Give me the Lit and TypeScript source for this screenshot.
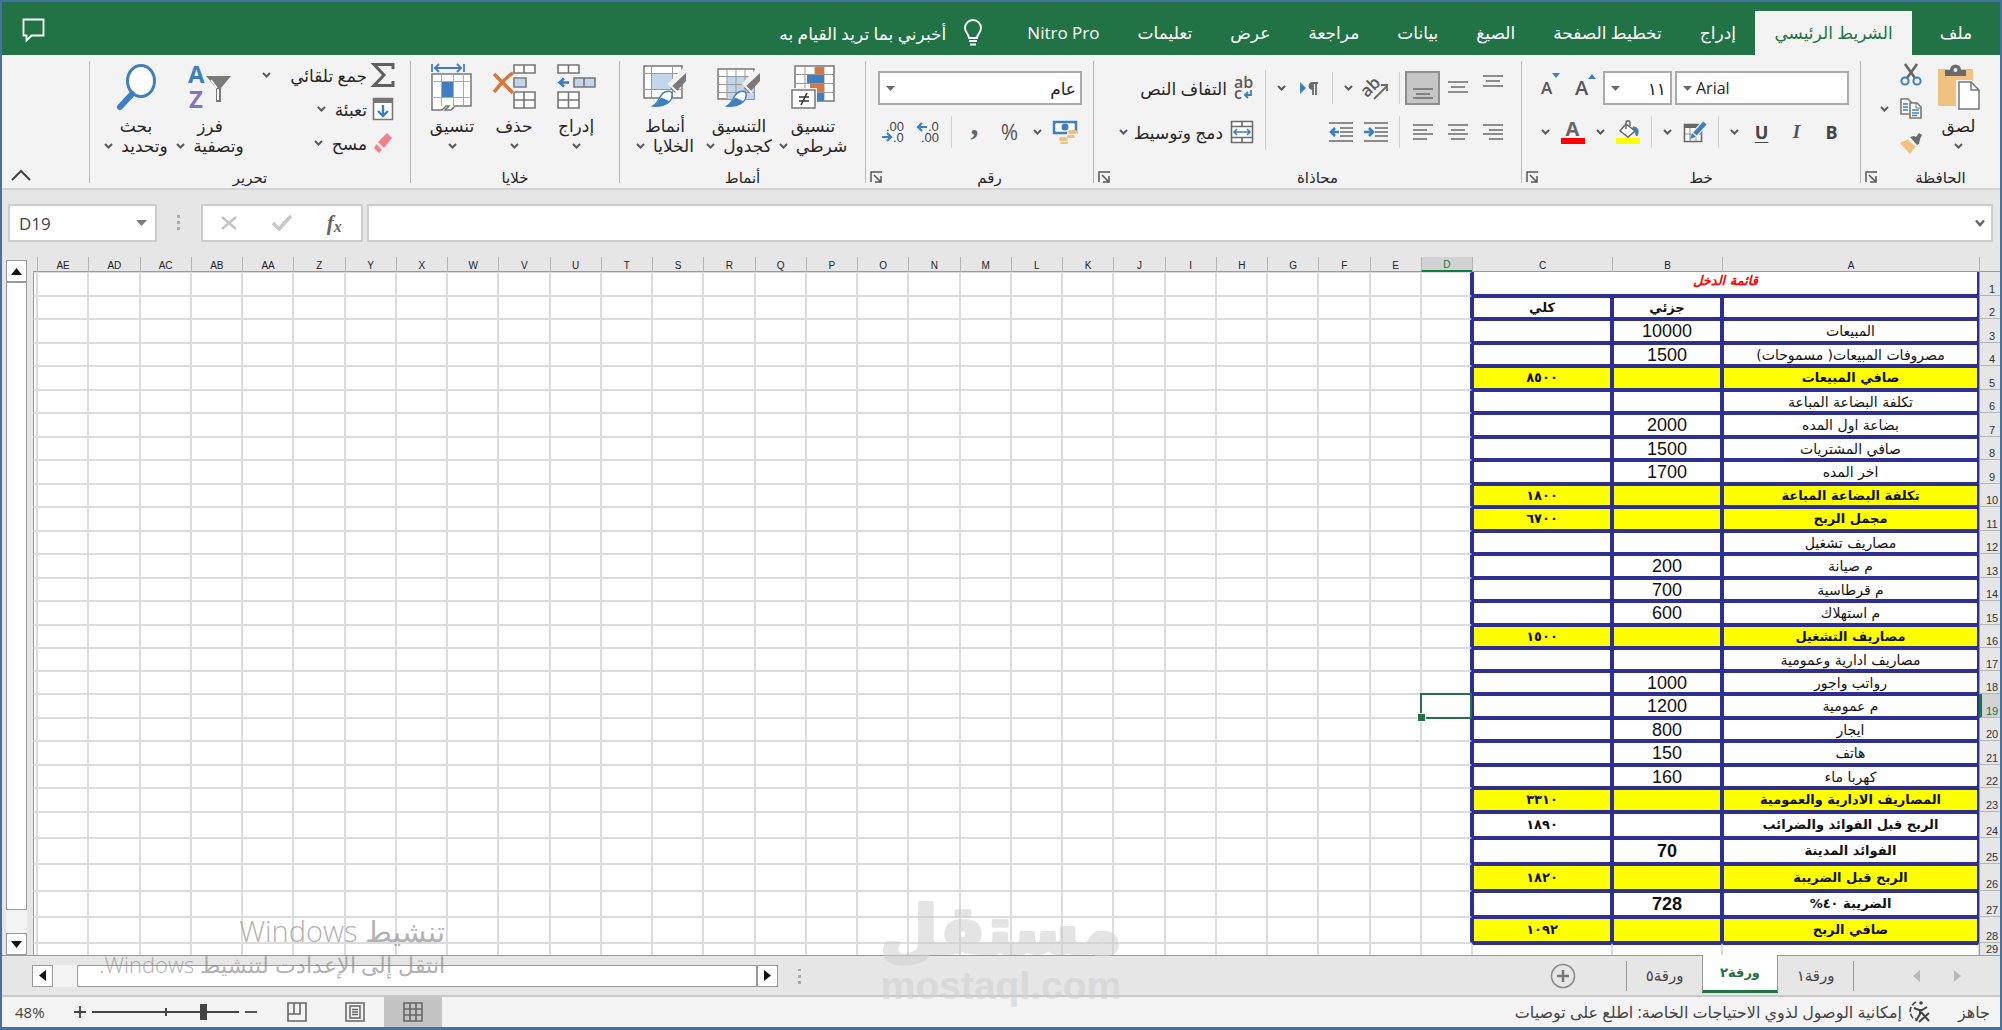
import { LitElement, html, css, svg, nothing } from "lit";
import { customElement, property } from "lit/decorators.js";
import { classMap } from "lit/directives/class-map.js";

const icon = (w: number, h: number, body: unknown) =>
  html`<svg width=${w} height=${h} viewBox="0 0 ${w} ${h}" fill="none" direction="ltr" aria-hidden="true">${body}</svg>`;

const B = "#3f7fbf";
const T = "#efc27f";
const O = "#d9763c";

const chevron = icon(9, 6, svg`<path d="M1 1l3.5 3.5L8 1" stroke="#5a5a5a" stroke-width="2"/>`);
const caret = icon(9, 5, svg`<path d="M0 0h9L4.500 5z" fill="#6a6a6a"/>`);
const launcher = icon(12, 12, svg`<path d="M1 11V1h11M4 4l6 6M11 5v6H5" stroke="#555" stroke-width="1.500"/>`);

const paste = icon(42, 45, svg`<rect y="4" width="35" height="37" rx="1" fill="${T}"/><path d="M7 11V5h5a5.500 5.500 0 0 1 11 0h5v6z" fill="#6a6a6a"/><circle cx="17.500" cy="5" r="2" fill="#f3f3f3"/><path d="M20 17h13l8 8v19H20z" fill="#fff" stroke="#f3f3f3" stroke-width="4"/><path d="M21 17h12l8 8v19H21zM33 17v8h8" fill="#fff" stroke="#777" stroke-width="1.500"/>`);
const cut = icon(22, 22, svg`<path d="M5 0l10 14M17 0L7 14" stroke="#666" stroke-width="2.600"/><circle cx="5" cy="17" r="3.600" stroke="${B}" stroke-width="2"/><circle cx="17" cy="17" r="3.600" stroke="${B}" stroke-width="2"/>`);
const copy = icon(22, 22, svg`<path d="M1 1h7l3 3v12H1z" fill="#fff" stroke="#777" stroke-width="1.600"/><path d="M3 6h5M3 9h5M3 12h5" stroke="${B}" stroke-width="1.300"/><path d="M10 5h7l4 4v11H10z" fill="#fff" stroke="#777" stroke-width="1.600"/><path d="M16 5v5h5" stroke="#777"/><path d="M12 12h7M12 15h7M12 17.500h5" stroke="${B}" stroke-width="1.300"/>`);
const brush = icon(24, 22, svg`<path d="M1 11l8-4 8 7-6 8z" fill="${T}"/><path d="M9 6l9 8" stroke="#f3f3f3" stroke-width="3"/><path d="M11 5l4-1 2 1 3-4 3 2-2 4-1 5-2 1z" fill="#6a6a6a"/>`);

const bigA = (s: number, up: boolean) => html`<span class="grow"><span class=${s > 19 ? "ga" : "gs"}>A</span>${icon(8, 5, up ? svg`<path d="M4 0l4 5H0z" fill="${B}"/>` : svg`<path d="M0 0h8L4 5z" fill="${B}"/>`)}</span>`;
const borders = icon(24, 22, svg`<path d="M1.500 3.500h17v17h-17z" fill="#fff" stroke="#666" stroke-width="1.600"/><path d="M1 3h18v4H1z" fill="#666"/><path d="M7 7v13M13 7v13M2 13h17" stroke="#888"/><path d="M21 3L10 15" stroke="#f3f3f3" stroke-width="7"/><path d="M22 2L12 13" stroke="${B}" stroke-width="4.500"/><path d="M7 18l2-6 4 4z" fill="${B}"/>`);
const bucket = icon(24, 24, svg`<rect y="18" width="24" height="6" fill="#ff0"/><path d="M17 7c6 0 6 5 4 9-2-2-1-5-4-7z" fill="${B}" stroke="${B}"/><path d="M10 4l9 7-7 6-8-6z" fill="#fff" stroke="#666" stroke-width="1.500"/><path d="M10 9V3c0-3 4-3 4 0v3" stroke="#666" stroke-width="1.500"/>`);
const fontColor = html`<span class="fcol"><b>A</b><i></i></span>`;

const lines = (ys: number[], xs: [number, number][]) =>
  icon(22, 22, svg`<path d="${ys.map((y, i) => `M${xs[i][0]} ${y}H${xs[i][1]}`).join("")}" stroke="#6b6b6b" stroke-width="1.600"/>`);
const full: [number, number] = [1, 21];
const mid: [number, number] = [4, 18];
const right: [number, number] = [7, 21];
const left: [number, number] = [1, 15];
const vTop = lines([-1, 4, 9], [full, mid, full]);
const vMid = lines([5, 10, 15], [full, mid, full]);
const vBot = lines([12, 17, 21], [full, mid, full]);
const aRight = lines([4, 9, 13, 18], [full, right, full, right]);
const aCenter = lines([4, 9, 13, 18], [full, mid, full, mid]);
const aLeft = lines([4, 9, 13, 18], [full, left, full, left]);
const orient = icon(26, 24, svg`<g transform="rotate(-45 9 13)"><text x="-1" y="16" font-family="Open Sans, sans-serif" font-size="17" font-weight="600" fill="#5a5a5a">ab</text></g><path d="M11 23L24 10M18 9h6v6" stroke="#6b6b6b" stroke-width="1.800"/>`);
const rtlPara = icon(22, 16, svg`<path d="M2 2v12l6-6z" fill="${B}"/><path d="M15 3v12M18 3v12M20 3h-6" stroke="#6b6b6b" stroke-width="1.800"/><path d="M15 2c-6 0-6 8 0 8z" fill="#6b6b6b"/>`);
const indentIn = icon(24, 22, svg`<path d="M0 2h24M11 7h13M11 11h13M11 15h13M0 20h24" stroke="#6b6b6b" stroke-width="1.600"/><path d="M0 11h8M5 7l4 4-4 4" stroke="${B}" stroke-width="2.600"/>`);
const indentOut = icon(24, 22, svg`<path d="M0 2h24M11 7h13M11 11h13M11 15h13M0 20h24" stroke="#6b6b6b" stroke-width="1.600"/><path d="M2 11h8M6 7l-4 4 4 4" stroke="${B}" stroke-width="2.600"/>`);
const wrap = icon(20, 24, svg`<text x="0" y="12" font-family="Open Sans, sans-serif" font-size="16" font-weight="600" fill="#5a5a5a">ab</text><text x="0" y="23" font-family="Open Sans, sans-serif" font-size="16" font-weight="600" fill="#5a5a5a">c</text><path d="M17 14v5h-5M14 16l-3 3 3 3" stroke="${B}" stroke-width="1.800"/>`);
const merge = icon(24, 24, svg`<path d="M1.500 1.500h21v21h-21zM1 6.500h22M1 17.500h22M12 1v5M12 18v5" fill="#fff" stroke="#6b6b6b" stroke-width="1.600"/><path d="M4 12h16M7 9l-3 3 3 3M17 9l3 3-3 3" stroke="${B}" stroke-width="1.600"/>`);

const currency = icon(24, 24, svg`<path d="M1 2h22v11H1z" fill="#fff" stroke="${B}" stroke-width="2.500"/><circle cx="12" cy="7" r="3.500" fill="${B}"/><path d="M0 1h5L0 6zM24 1h-5l5 5zM0 14h5L0 9z" fill="${B}"/><path d="M14 12h10v8h-8v4H6v-7h8z" fill="#f3f3f3"/><rect x="15" y="10" width="9" height="4" rx="2" fill="${T}"/><rect x="14" y="15" width="8" height="3" rx="1.500" fill="${T}"/><rect x="6" y="17" width="9" height="4" rx="2" fill="${T}"/><rect x="7" y="22" width="8" height="2" rx="1" fill="${T}"/>`);
const decInc = icon(22, 22, svg`<path d="M1 6h9M5 2L1 6l4 4" stroke="${B}" stroke-width="2.200"/><text x="11" y="10" font-family="Liberation Sans" font-size="13" fill="#444">.0</text><text x="4" y="21" font-family="Liberation Sans" font-size="13" fill="#444">.00</text>`);
const decDec = icon(22, 22, svg`<text x="4" y="10" font-family="Liberation Sans" font-size="13" fill="#444">.00</text><text x="11" y="21" font-family="Liberation Sans" font-size="13" fill="#444">.0</text><path d="M0 16h9M5 12l4 4-4 4" stroke="${B}" stroke-width="2.200"/>`);

const condFmt = icon(44, 44, svg`<path d="M4 1h39v35H4z" fill="#fff" stroke="#777" stroke-width="1.500"/><path d="M4 9.500h39M4 18.500h39M4 27.500h39M14 1v35M24 1v35M33 1v35" stroke="#999"/><path d="M24 2h9v7h-9zM19 19h14v8H19z" fill="${O}"/><path d="M16 10h17v8H16zM26 28h7v8h-7z" fill="${B}"/><path d="M1 25h23v18H1z" fill="#fff" stroke="#f3f3f3" stroke-width="4"/><path d="M1 25h23v18H1z" fill="#fff" stroke="#777" stroke-width="1.500"/><path d="M8 32h10M8 36h10M16 28l-6 12" stroke="#333" stroke-width="1.600"/>`);
const paint = svg`<path d="M43 6L28 22" stroke="#f3f3f3" stroke-width="9"/><path d="M43 8v8L32 28l-5-5z" fill="#7a7a7a"/><path d="M27 20l8 8" stroke="#f3f3f3" stroke-width="2"/><path d="M29 28c2 10-10 14-19 13 7-4 6-12 12-14 3-1 6-1 7 1z" fill="#fff" stroke="${B}" stroke-width="1.500"/><path d="M10 41c5-3 6-7 8-8 3 0 5 2 8 3-3 5-10 6-16 5z" fill="${B}"/>`;
const fmtTable = icon(44, 44, svg`<path d="M1 4h36v30H1z" fill="#fff" stroke="#777" stroke-width="1.500"/><path d="M10 12h27v22H10z" fill="#c3d5ea"/><path d="M1 11.500h36M1 19.500h36M1 27.500h36M10 4v30M19 4v30M28 4v30" stroke="#999"/>${paint}`);
const cellStyles = icon(44, 44, svg`<path d="M1 1h38v32H1z" fill="#fff" stroke="#777" stroke-width="1.500"/><path d="M9 9h20v15H9z" fill="#c3d5ea"/><path d="M1 8.500h38M1 24.500h38M8.500 1v32M29.500 1v32" stroke="#999"/>${paint}`);

const cellsInsert = icon(40, 46, svg`<path d="M2 1h21v8H2zM12.500 1v8M2 28h21v16H2zM12.500 28v16M2 36h21" fill="#fff" stroke="#777" stroke-width="1.600"/><path d="M18 14h21v9H18zM28 14v9" fill="#c3d5ea" stroke="#777" stroke-width="1.600"/><path d="M3 18.500h10M8 14.500l-4.500 4L8 22.500" stroke="${B}" stroke-width="2.600"/>`);
const cellsDelete = icon(46, 46, svg`<path d="M23 1h21v8H23zM33 1v8M23 28h21v16H23zM33 28v16M23 36h21M23 14h12v9H23z" fill="#fff" stroke="#777" stroke-width="1.600"/><path d="M24 15h10v7H24z" fill="#c3d5ea"/><path d="M3 10c6 6 14 14 19 19M22 9C15 13 8 22 3 28" stroke="#f3f3f3" stroke-width="7"/><path d="M3 10c6 6 14 14 19 19M22 9C15 13 8 22 3 28" stroke="${O}" stroke-width="3.500"/>`);
const cellsFormat = icon(44, 48, svg`<path d="M2 1v8M34 1v8M4 5h28M9 1L5 5l4 4M27 1l4 4-4 4" stroke="${B}" stroke-width="1.800"/><path d="M2 11h39v32H25l-4 4h-6l4-4h-3l-4 4H2z" fill="#fff" stroke="#777" stroke-width="1.500"/><path d="M2 18.500h39M2 34.500h39M11.500 11v32M23.500 11v32M33.500 11v32" stroke="#aaa"/><path d="M12 19h11v15H12z" fill="${B}"/>`);

const sigma = icon(22, 24, svg`<path d="M21 6V1.500H2L12 12 2 22.500h19V18" stroke="#5f5f5f" stroke-width="3"/>`);
const fill = icon(22, 24, svg`<path d="M1.500 1.500h19v21h-19z" fill="#fff" stroke="#777" stroke-width="1.600"/><path d="M1 1h20v5H1z" fill="#777"/><path d="M11 8v11M6 14l5 5 5-5" stroke="${B}" stroke-width="2.400"/>`);
const eraser = icon(22, 22, svg`<path d="M15 1l5 5-8 10-6-6z" fill="#f0808a"/><path d="M4.500 12l5.500 6-3 3-5-5z" fill="#f0808a"/>`);
const sortIcon = icon(44, 46, svg`<text x="0" y="19" font-family="Open Sans, sans-serif" font-size="24" font-weight="700" fill="${B}">A</text><text x="1" y="44" font-family="Open Sans, sans-serif" font-size="24" font-weight="700" fill="#8474bd">Z</text><path d="M18 12h25L33 24v14h-5V24z" fill="#7a7a7a"/><path d="M29 24l-6-8" stroke="#fff" stroke-width="1.500"/><path d="M30 25v11" stroke="#fff" stroke-width="2"/>`);
const findIcon = icon(42, 48, svg`<ellipse cx="26" cy="18" rx="13.500" ry="15.500" fill="#fff" stroke="${B}" stroke-width="3"/><path d="M17 31L5 44" stroke="${B}" stroke-width="6" stroke-linecap="round"/>`);

const bulb = icon(18, 26, svg`<path d="M5 18c0-4-4-5-4-10a8 8 0 0 1 16 0c0 5-4 6-4 10zM5 21h8M6 24.500h6" stroke="#fff" stroke-width="1.800"/>`);
const comment = icon(26, 28, svg`<path d="M1.500 3.500h20v16h-12l-5 5v-5h-3z" stroke="#fff" stroke-width="1.800"/>`);

interface Row { n: number; h: number; a?: string; b?: string; c?: string; kind?: "total" | "strong" | "title" | "heads" }

const rows: Row[] = [
  { n: 1, h: 24, a: "قائمة الدخل", kind: "title" },
  { n: 2, h: 23, b: "جزئي", c: "كلي", kind: "heads" },
  { n: 3, h: 24, a: "المبيعات", b: "10000" },
  { n: 4, h: 23, a: "مصروفات المبيعات( مسموحات)", b: "1500" },
  { n: 5, h: 24, a: "صافي المبيعات", c: "٨٥٠٠", kind: "total" },
  { n: 6, h: 23, a: "تكلفة البضاعة المباعة" },
  { n: 7, h: 24, a: "بضاعة اول المده", b: "2000" },
  { n: 8, h: 23, a: "صافي المشتريات", b: "1500" },
  { n: 9, h: 24, a: "اخر المده", b: "1700" },
  { n: 10, h: 23, a: "تكلفة البضاعة المباعة", c: "١٨٠٠", kind: "total" },
  { n: 11, h: 24, a: "مجمل الربح", c: "٦٧٠٠", kind: "total" },
  { n: 12, h: 23, a: "مصاريف تشغيل" },
  { n: 13, h: 24, a: "م صيانة", b: "200" },
  { n: 14, h: 23, a: "م قرطاسية", b: "700" },
  { n: 15, h: 24, a: "م استهلاك", b: "600" },
  { n: 16, h: 23, a: "مصاريف التشغيل", c: "١٥٠٠", kind: "total" },
  { n: 17, h: 23, a: "مصاريف ادارية وعمومية" },
  { n: 18, h: 23, a: "رواتب واجور", b: "1000" },
  { n: 19, h: 24, a: "م عمومية", b: "1200" },
  { n: 20, h: 23, a: "ايجار", b: "800" },
  { n: 21, h: 24, a: "هاتف", b: "150" },
  { n: 22, h: 23, a: "كهربا ماء", b: "160" },
  { n: 23, h: 24, a: "المصاريف الادارية والعمومية", c: "٣٣١٠", kind: "total" },
  { n: 24, h: 26, a: "الربح قبل الفوائد والضرائب", c: "١٨٩٠", kind: "strong" },
  { n: 25, h: 26, a: "الفوائد المدينة", b: "70", kind: "strong" },
  { n: 26, h: 27, a: "الربح قبل الضريبة", c: "١٨٢٠", kind: "total" },
  { n: 27, h: 26, a: "الضريبة ٤٠%", b: "728", kind: "strong" },
  { n: 28, h: 26, a: "صافي الربح", c: "١٠٩٢", kind: "total" },
  { n: 29, h: 26 },
];

const restCols = "D E F G H I J K L M N O P Q R S T U V W X Y Z AA AB AC AD AE".split(" ");

@customElement("excel-group")
class ExcelGroup extends LitElement {
  @property() label = "";
  @property({ type: Boolean }) launch = false;
  static styles = css`
    :host { display: flex; flex-direction: column; box-sizing: border-box; flex: none; }
    .body { display: flex; height: 109px; }
    .foot { display: flex; height: 20px; align-items: center; font-size: 15px; }
    .name { flex: 1; text-align: center; }
    button { border: 0; background: none; padding: 0; width: 20px; height: 18px; display: grid; place-items: center; }
    svg { display: block; }
  `;
  render() {
    return html`<div class="body"><slot></slot></div>
      <div class="foot"><span class="name">${this.label}</span>
      ${this.launch ? html`<button aria-label="خيارات ${this.label}">${launcher}</button>` : nothing}</div>`;
  }
}

@customElement("excel-sheet")
class ExcelSheet extends LitElement {
  static styles = css`
    :host { display: block; flex: 1; min-width: 0; overflow: hidden; direction: rtl; font-family: "Liberation Sans", "DejaVu Sans", sans-serif; }
    table { width: 100%; table-layout: fixed; border-collapse: separate; border-spacing: 0; }
    th, td { box-sizing: border-box; padding: 0; overflow: hidden; white-space: nowrap; text-align: center; line-height: 16px; }
    .rowhead { width: 21px; } .wa { width: 257px; } .wb { width: 110px; } .wc { width: 140px; } .stub { width: 4px; }
    thead th { height: 15px; line-height: 11px; font-size: 10px; font-weight: 400; color: #222; vertical-align: bottom; border-bottom: 1px solid #9a9a9a; border-left: 1px solid #b5b5b5; background: #e6e6e6; }
    thead .on { background: #d2d2d2; color: #217346; border-bottom: 2px solid #107c41; }
    thead .edge { border-left: 0; }
    .h23 { height: 23px; } .h24 { height: 24px; } .h26 { height: 26px; } .h27 { height: 27px; }
    tbody th { background: #e6e6e6; font-size: 11px; font-weight: 400; color: #333; line-height: 12px; vertical-align: bottom; border-bottom: 1px solid #b5b5b5; border-left: 1px solid #9a9a9a; padding-left: 4px; text-align: center; }
    tbody th.on { background: #d2d2d2; color: #217346; border-left: 3px solid #107c41; padding-left: 2px; }
    tbody th.top { vertical-align: top; }
    td { background: #fff; border: 1px solid #dcdcdc; }
    td.edge { border-left: 1px solid #9a9a9a; }
    td.box { border: 2px solid #2d3092; color: #111; }
    td.a { font-family: "DejaVu Sans", sans-serif; font-size: 14px; }
    td.b { font-size: 18px; }
    td.c { font-family: "DejaVu Sans", sans-serif; font-size: 13px; font-weight: 700; }
    .total td.box { background: #ff0; }
    .total td.box, .strong td.box { font-weight: 700; }
    .total td.a, .strong td.a, .title td.a { font-size: 13px; }
    .heads td.box { font-family: "DejaVu Sans", sans-serif; font-size: 13px; font-weight: 700; }
    .title td.a { border-top: 0; color: #f00; font-weight: 700; font-style: italic; vertical-align: top; line-height: 18px; }
    td.after { border-top: 2px solid #2d3092; }
    td.navy { border-right: 2px solid #2d3092; }
    td.sel { position: relative; overflow: visible; }
    .cursor { position: absolute; inset: -2px; border: 2px solid #217346; }
    .cursor::after { content: ""; position: absolute; left: -5px; bottom: -5px; width: 7px; height: 7px; background: #217346; border: 1px solid #fff; }
  `;
  row(r: Row) {
    const inBox = r.n < 29;
    const cell = (k: string, v?: string) => html`<td class=${inBox ? `box ${k}` : "after"}>${v ?? nothing}</td>`;
    return html`<tr class="h${r.h} ${r.kind ?? ""}">
      <th scope="row" class=${classMap({ on: r.n === 19, top: !inBox })}>${r.n}</th>
      ${r.kind === "title" ? html`<td class="box a" colspan="3">${r.a}</td>` : html`${cell("a", r.a)}${cell("b", r.b)}${cell("c", r.c)}`}
      ${restCols.map((c) => html`<td class=${classMap({ navy: c === "D" && inBox, sel: c === "D" && r.n === 19 })}>${c === "D" && r.n === 19 ? html`<span class="cursor"></span>` : nothing}</td>`)}
      <td class="edge"></td>
    </tr>`;
  }
  render() {
    return html`<table>
      <colgroup><col class="rowhead"><col class="wa"><col class="wb"><col class="wc">${restCols.map(() => html`<col>`)}<col class="stub"></colgroup>
      <thead><tr><th></th><th scope="col">A</th><th scope="col">B</th><th scope="col">C</th>
        ${restCols.map((c) => html`<th scope="col" class=${classMap({ on: c === "D" })}>${c}</th>`)}<th class="edge"></th></tr></thead>
      <tbody>${rows.map((r) => this.row(r))}</tbody>
    </table>`;
  }
}

@customElement("app-root")
class AppRoot extends LitElement {
  static styles = css`
    :host { display: block; direction: rtl; color: #262626; font-family: "Open Sans", "DejaVu Sans", sans-serif; font-size: 15px; }
    * { box-sizing: border-box; }
    svg { display: block; flex: none; overflow: visible; }
    button, input, select { font: inherit; color: inherit; margin: 0; }
    button { border: 0; background: none; padding: 0; display: flex; align-items: center; justify-content: center; white-space: nowrap; }
    .app { height: 100vh; min-height: 600px; display: flex; flex-direction: column; position: relative; overflow: hidden; border: 2px solid #4472a4; border-bottom-width: 3px; background: #e6e6e6; }
    .tabs { display: flex; height: 53px; flex: none; background: #217346; color: #fff; padding: 9px 0 0 20px; align-items: stretch; font-size: 17px; }
    .tabs button { padding: 0 19px 2px; }
    .tabs .file { padding: 0 16px 2px; min-width: 88px; }
    .tabs .home { background: #f3f3f3; color: #217346; min-width: 157px; }
    .tabs .tell { gap: 18px; padding: 0 26px 0; }
    .tabs .note { margin-right: auto; padding: 0 0 6px; }
    .ribbon { display: flex; flex: none; height: 135px; background: #f3f3f3; border-bottom: 2px solid #d4d4d4; padding-top: 3px; font-size: 17px; }
    .split { width: 1px; margin: 3px 0; height: 122px; background: #b8b8b8; flex: none; }
    .g-clip { width: 139px; } .g-font { width: 338px; } .g-align { width: 427px; } .g-num { width: 227px; }
    .g-style { width: 245px; } .g-cells { width: 208px; } .g-edit { width: 320px; }
    .big { flex-direction: column; justify-content: flex-start; width: 74px; }
    .big.n { width: 62px; }
    .big .pic { height: 58px; display: grid; place-items: center; }
    .big .ln { height: 20px; line-height: 20px; display: flex; align-items: center; gap: 8px; }
    .col { display: flex; flex-direction: column; justify-content: center; height: 102px; flex: none; }
    .col button { height: 34px; }
    .g-clip .big { width: 61px; margin-right: 11px; }
    .g-clip .col button { width: 34px; }
    .g-clip .col .ch { width: 20px; }
    .g-style > :first-child { margin-right: 15px; }
    .g-cells > :first-child { margin-right: 12px; }
    .rows { display: flex; flex-direction: column; gap: 10px; padding: 13px 11px 0 0; }
    .rows.flush { padding-right: 0; }
    .r { display: flex; height: 34px; align-items: center; }
    .t { width: 35px; height: 34px; }
    .t.pressed { background: #c6c6c6; border: 2px solid #8f8f8f; }
    .ch { width: 20px; height: 34px; }
    .bar { width: 12px; height: 32px; flex: none; display: flex; justify-content: center; }
    .bar::before { content: ""; width: 1px; background: #cfcfcf; }
    .bar.tall { height: 80px; margin-top: 12px; }
    .field { position: relative; display: block; height: 34px; }
    .field select { appearance: none; width: 100%; height: 34px; border: 2px solid #ababab; border-radius: 0; background: #fff; padding: 0 4px 0 24px; }
    .field svg { position: absolute; left: 8px; top: 15px; }
    .fname { width: 174px; font-size: 16px; } .fsize { width: 69px; margin-right: 3px; } .fnum { width: 204px; }
    .fname select { direction: ltr; padding-left: 19px; }
    .bold { font-weight: 700; font-size: 18px; color: #444; }
    .ital { font-family: "Liberation Serif", serif; font-style: italic; font-weight: 700; font-size: 19px; color: #555; }
    .und { text-decoration: underline; text-underline-offset: 3px; }
    .grow { display: flex; direction: ltr; color: #555; font-weight: 600; }
    .ga { font-size: 20px; line-height: 28px; } .gs { font-size: 17px; line-height: 30px; }
    .fcol { display: flex; flex-direction: column; align-items: center; color: #666; font-size: 20px; line-height: 18px; }
    .fcol i { width: 24px; height: 6px; background: #f00; }
    .pct { font-size: 21px; color: #555; }
    .comma { font: 700 32px/20px "Liberation Serif", serif; color: #666; padding-bottom: 16px; }
    .wide { gap: 7px; padding-right: 5px; }
    .e3 { width: 163px; padding-right: 16px; }
    .e3 button { justify-content: flex-start; gap: 5px; }
    .e3 .far { margin-right: 14px; } .e3 .near { margin-right: 4px; }
    .fold { margin-right: auto; align-self: flex-end; padding: 0 0 6px 8px; }
    .fbar { display: flex; direction: ltr; flex: none; height: 67px; padding: 14px 7px 15px 6px; align-items: stretch; }
    .white { background: #fff; border: 2px solid #cdcdcd; display: flex; align-items: center; }
    .namebox { width: 149px; padding-right: 8px; }
    .namebox input { width: 0; flex: 1; border: 0; background: none; padding: 0 0 0 9px; font-size: 17px; color: #444; }
    .dots { width: 44px; display: grid; place-items: center; }
    .fx { width: 162px; justify-content: space-around; padding: 0 2px 0 0; margin-right: 4px; }
    .fxi { font: italic 700 21px/24px "Liberation Serif", serif; color: #666; }
    .fxi sub { font-size: 16px; line-height: 0; vertical-align: -2px; }
    .formula { flex: 1; padding-right: 6px; }
    .formula input { flex: 1; border: 0; background: none; }
    .work { flex: 1; min-height: 0; display: flex; direction: ltr; border-bottom: 1px solid #9a9a9a; }
    .vs { width: 31px; padding: 3px 6px 0 4px; display: flex; flex-direction: column; flex: none; }
    .sb { width: 21px; height: 22px; flex: none; background: #fff; border: 1px solid #999; }
    .vtrack { flex: 1; background: #f3f3f3; display: flex; flex-direction: column; padding-bottom: 23px; }
    .thumb { flex: 1; background: #fff; border: 1px solid #999; }
    .strip { display: flex; flex: none; height: 41px; border-bottom: 2px solid #c8c8c8; align-items: center; font-family: "DejaVu Sans", sans-serif; font-size: 15px; color: #444; }
    .nav { display: flex; width: 146px; padding-right: 38px; gap: 34px; }
    .st { width: 76px; height: 36px; align-self: flex-start; }
    .st.first { border-right: 1px solid #9a9a9a; height: 30px; margin-top: 5px; }
    .st.last { border-left: 1px solid #9a9a9a; height: 30px; margin-top: 5px; }
    .st.act { background: #fff; color: #217346; font-size: 13px; font-weight: 700; border: 1px solid #9a9a9a; border-top: 0; border-bottom: 3px solid #217346; margin-top: -1px; height: 38px; }
    .plus { margin: 0 50px 0 auto; }
    .hs { display: flex; direction: ltr; flex: 0 1 746px; margin-left: 30px; }
    .htrack { flex: 1; background: #f3f3f3; display: flex; padding-left: 24px; }
    .hdots { margin-left: 20px; padding-top: 3px; }
    .status { display: flex; flex: none; height: 30px; background: #f3f3f3; align-items: center; padding: 0 10px 0 13px; font-size: 16px; color: #444; }
    .acc { margin-right: 26px; gap: 6px; }
    .views { display: flex; margin-right: auto; height: 30px; }
    .views button { width: 58px; height: 30px; }
    .views .on { background: #c4c4c4; }
    .zoom { display: flex; align-items: center; gap: 3px; margin-right: 8px; }
    .zoom button { width: 18px; height: 30px; }
    .zoom input { appearance: none; width: 147px; height: 20px; background: linear-gradient(#444, #444) center / 100% 2px no-repeat, linear-gradient(#444, #444) center / 2px 8px no-repeat; }
    .zoom input::-webkit-slider-thumb { appearance: none; width: 7px; height: 16px; background: #444; }
    .pc { width: 56px; justify-content: flex-end; font-size: 15px; }
    .brand { position: absolute; left: 50%; bottom: 14px; width: 244px; margin-left: -122px; opacity: .55; }
    .activate { position: absolute; left: 79px; bottom: 49px; width: 364px; color: #8a8a8a; opacity: .65; font-family: "Open Sans", "DejaVu Sans", sans-serif; font-weight: 300; pointer-events: none; white-space: nowrap; }
    .activate p { margin: 0; }
    .activate .l1 { font-size: 29px; line-height: 38px; } .activate .l2 { font-size: 22px; line-height: 28px; }
  `;

  big(ic: unknown, l1: string, l2: string | null, cls = "") {
    return html`<button class="big ${cls}"><span class="pic">${ic}</span><span class="ln">${l1}</span><span class="ln">${l2 ?? nothing}${chevron}</span></button>`;
  }
  tool(ic: unknown, label: string, cls = "") {
    return html`<button class="t ${cls}" aria-label=${label}>${ic}</button>`;
  }
  drop(label: string) {
    return html`<button class="ch" aria-label=${label}>${chevron}</button>`;
  }

  ribbon() {
    const bar = html`<span class="bar"></span>`;
    const split = html`<span class="split"></span>`;
    return html`<div class="ribbon">
      <excel-group class="g-clip" label="الحافظة" launch>
        ${this.big(paste, "لصق", null)}
        <div class="col"><button aria-label="قص">${cut}</button><button aria-label="نسخ">${copy}</button><button aria-label="نسخ التنسيق">${brush}</button></div>
        <div class="col">${this.drop("خيارات النسخ")}</div>
      </excel-group>${split}
      <excel-group class="g-font" label="خط" launch>
        <div class="rows">
          <div class="r">
            <label class="field fname"><select aria-label="الخط"><option>Arial</option></select>${caret}</label>
            <label class="field fsize"><select aria-label="حجم الخط"><option>١١</option></select>${caret}</label>
            ${this.tool(bigA(20, true), "تكبير الخط")}${this.tool(bigA(17, false), "تصغير الخط")}
          </div>
          <div class="r">
            ${this.tool(html`<span class="bold">B</span>`, "غامق")}${this.tool(html`<span class="ital">I</span>`, "مائل")}${this.tool(html`<span class="bold und">U</span>`, "تسطير")}${this.drop("خيارات التسطير")}${bar}
            ${this.tool(borders, "حدود")}${this.drop("خيارات الحدود")}${bar}
            ${this.tool(bucket, "لون التعبئة")}${this.drop("ألوان التعبئة")}${this.tool(fontColor, "لون الخط")}${this.drop("ألوان الخط")}
          </div>
        </div>
      </excel-group>${split}
      <excel-group class="g-align" label="محاذاة" launch>
        <div class="rows">
          <div class="r">${this.tool(vTop, "محاذاة للأعلى")}${this.tool(vMid, "محاذاة للوسط")}${this.tool(vBot, "محاذاة للأسفل", "pressed")}${bar}${this.tool(orient, "الاتجاه")}${this.drop("خيارات الاتجاه")}${bar}${this.tool(rtlPara, "اتجاه النص")}${this.drop("خيارات اتجاه النص")}</div>
          <div class="r">${this.tool(aRight, "محاذاة إلى اليمين")}${this.tool(aCenter, "توسيط")}${this.tool(aLeft, "محاذاة إلى اليسار")}${bar}${this.tool(indentIn, "إنقاص المسافة البادئة")}${this.tool(indentOut, "زيادة المسافة البادئة")}</div>
        </div>
        <span class="bar tall"></span>
        <div class="rows flush">
          <div class="r"><button class="wide">${wrap}<span>التفاف النص</span></button></div>
          <div class="r"><button class="wide">${merge}<span>دمج وتوسيط</span></button>${this.drop("خيارات الدمج")}</div>
        </div>
      </excel-group>${split}
      <excel-group class="g-num" label="رقم" launch>
        <div class="rows">
          <div class="r"><label class="field fnum"><select aria-label="تنسيق الأرقام"><option>عام</option></select>${caret}</label></div>
          <div class="r">${this.tool(currency, "تنسيق محاسبي")}${this.drop("خيارات العملة")}${this.tool(html`<span class="pct">%</span>`, "نسبة مئوية")}${this.tool(html`<span class="comma">,</span>`, "نمط الفاصلة")}${bar}${this.tool(decInc, "زيادة المنازل العشرية")}${this.tool(decDec, "إنقاص المنازل العشرية")}</div>
        </div>
      </excel-group>${split}
      <excel-group class="g-style" label="أنماط">
        ${this.big(condFmt, "تنسيق", "شرطي")}${this.big(fmtTable, "التنسيق", "كجدول")}${this.big(cellStyles, "أنماط", "الخلايا")}
      </excel-group>${split}
      <excel-group class="g-cells" label="خلايا">
        ${this.big(cellsInsert, "إدراج", null, "n")}${this.big(cellsDelete, "حذف", null, "n")}${this.big(cellsFormat, "تنسيق", null, "n")}
      </excel-group>${split}
      <excel-group class="g-edit" label="تحرير">
        <div class="col e3">
          <button>${sigma}<span>جمع تلقائي</span><span class="far">${chevron}</span></button>
          <button>${fill}<span>تعبئة</span><span class="near">${chevron}</span></button>
          <button>${eraser}<span>مسح</span><span class="near">${chevron}</span></button>
        </div>
        ${this.big(sortIcon, "فرز", "وتصفية")}${this.big(findIcon, "بحث", "وتحديد")}
      </excel-group>${split}
      <button class="fold" aria-label="طي الشريط">${icon(22, 14, svg`<path d="M2 12l9-9 9 9" stroke="#444" stroke-width="2"/>`)}</button>
    </div>`;
  }

  render() {
    const tabs = ["إدراج", "تخطيط الصفحة", "الصيغ", "بيانات", "مراجعة", "عرض", "تعليمات", "Nitro Pro"];
    return html`<div class="app">
      <nav class="tabs">
        <button class="file">ملف</button><button class="home">الشريط الرئيسي</button>
        ${tabs.map((t) => html`<button>${t}</button>`)}
        <button class="tell">${bulb}<span>أخبرني بما تريد القيام به</span></button>
        <button class="note" aria-label="تعليقات">${comment}</button>
      </nav>
      ${this.ribbon()}
      <div class="fbar">
        <div class="white namebox"><input aria-label="مربع الاسم" value="D19">${icon(11, 6, svg`<path d="M0 0h11L5.500 6z" fill="#7a7a7a"/>`)}</div>
        <span class="dots">${icon(4, 16, svg`<path d="M0 0h3v3H0zM0 6h3v3H0zM0 12h3v3H0z" fill="#aaa"/>`)}</span>
        <div class="white fx">
          <button aria-label="إلغاء">${icon(18, 16, svg`<path d="M2 2l14 12M16 2L2 14" stroke="#c4c4c4" stroke-width="2.500"/>`)}</button>
          <button aria-label="إدخال">${icon(20, 16, svg`<path d="M1 8l6 6L19 1" stroke="#c8c8c8" stroke-width="3.500"/>`)}</button>
          <button aria-label="إدراج دالة"><span class="fxi">f<sub>x</sub></span></button>
        </div>
        <div class="white formula"><input aria-label="شريط الصيغة">${icon(10, 9, svg`<path d="M1 1.500l4 4.500 4-4.500" stroke="#666" stroke-width="2.500"/>`)}</div>
      </div>
      <div class="work">
        <div class="vs"><button class="sb" aria-label="تمرير لأعلى">${icon(11, 7, svg`<path d="M5.500 0L11 7H0z" fill="#111"/>`)}</button>
          <div class="vtrack"><div class="thumb"></div></div>
          <button class="sb" aria-label="تمرير لأسفل">${icon(11, 7, svg`<path d="M0 0h11L5.500 7z" fill="#111"/>`)}</button></div>
        <excel-sheet></excel-sheet>
      </div>
      <div class="strip">
        <div class="nav"><button aria-label="السابق">${icon(8, 12, svg`<path d="M0 0l7 6-7 6z" fill="#b8b8b8"/>`)}</button><button aria-label="التالي">${icon(8, 12, svg`<path d="M8 0L1 6l7 6z" fill="#b8b8b8"/>`)}</button></div>
        <button class="st first">ورقة١</button><button class="st act">ورقة٢</button><button class="st last">ورقة٥</button>
        <button class="plus" aria-label="ورقة جديدة">${icon(26, 26, svg`<circle cx="13" cy="13" r="11.500" stroke="#8a8a8a" stroke-width="1.600"/><path d="M13 7v12M7 13h12" stroke="#777" stroke-width="2.500"/>`)}</button>
        <span class="hdots">${icon(3, 16, svg`<path d="M0 0h3v2H0zM0 6h3v3H0zM0 12h3v3H0z" fill="#aaa"/>`)}</span>
        <div class="hs"><button class="sb" aria-label="تمرير لليسار">${icon(7, 11, svg`<path d="M7 0v11L0 5.500z" fill="#111"/>`)}</button>
          <div class="htrack"><div class="thumb"></div></div>
          <button class="sb" aria-label="تمرير لليمين">${icon(7, 11, svg`<path d="M0 0v11l7-5.500z" fill="#111"/>`)}</button></div>
      </div>
      <div class="status">
        <span>جاهز</span>
        <button class="acc">${icon(24, 24, svg`<path d="M8 2C2 5 0 13 5 18l3 1" stroke="#444" stroke-width="1.600" stroke-dasharray="5 2"/><circle cx="13" cy="3" r="1.800" fill="#444"/><path d="M6 8l5 2h3l5-3M12 10v4l-4 7M13 12l8 9M21 13l-10 9" stroke="#444" stroke-width="2"/>`)}<span>إمكانية الوصول لذوي الاحتياجات الخاصة: اطلع على توصيات</span></button>
        <div class="views">
          <button class="on" aria-label="عادي">${icon(20, 20, svg`<path d="M1 1h18v18H1zM1 7h18M1 13h18M7 1v18M13 1v18" stroke="#666" stroke-width="1.600"/>`)}</button>
          <button aria-label="تخطيط الصفحة">${icon(20, 20, svg`<path d="M1 1h18v18H1z M5 4h10v12H5z M7 7.500h6M7 10h6M7 12.500h6" stroke="#666" stroke-width="1.500"/>`)}</button>
          <button aria-label="معاينة فواصل الصفحات">${icon(20, 20, svg`<path d="M1 1h18v18H1zM1 12h12V1M7 1v11" stroke="#666" stroke-width="1.600"/>`)}</button>
        </div>
        <div class="zoom"><button aria-label="تصغير">${icon(12, 12, svg`<path d="M0 6h12" stroke="#444" stroke-width="1.800"/>`)}</button>
          <input type="range" min="0" max="100" value="23" aria-label="تكبير/تصغير">
          <button aria-label="تكبير">${icon(12, 12, svg`<path d="M0 6h12M6 0v12" stroke="#444" stroke-width="1.800"/>`)}</button></div>
        <button class="pc">48%</button>
      </div>
      <svg class="brand" viewBox="0 0 244 118" height="118" aria-hidden="true"><g fill="#cfcfcf" font-weight="700" text-anchor="middle"><text x="122" y="58" font-family="DejaVu Sans" font-size="66" stroke="#cfcfcf" stroke-width="4" stroke-linejoin="round">مستقل</text><text x="122" y="104" font-family="Liberation Sans" font-size="39">mostaql.com</text></g></svg>
      <div class="activate"><p class="l1">تنشيط Windows</p><p class="l2">انتقل إلى الإعدادت لتنشيط Windows.</p></div>
    </div>`;
  }
}
